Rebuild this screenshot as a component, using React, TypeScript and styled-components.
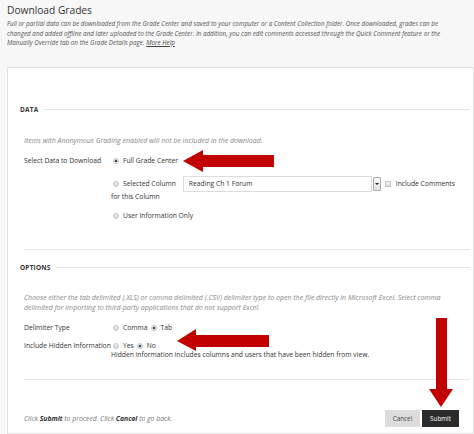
import React from "react";
import styled, { createGlobalStyle } from "styled-components";

const Global = createGlobalStyle`
  html, body { margin: 0; padding: 0; background: #ffffff; }
  body { font-family: "Open Sans", "Noto Sans", sans-serif; color: #333; }
  * { box-sizing: border-box; }
`;

const Page = styled.div`
  position: relative;
  width: 474px;
  height: 434px;
  overflow: hidden;
  background: #f7f7f7;
`;

const Header = styled.header`
  height: 67px;
  padding: 3px 7px 0;
`;

const Title = styled.h1`
  margin: 0;
  font-size: 10.2px;
  line-height: 14px;
  font-weight: 400;
  color: #333;
`;

const Intro = styled.p`
  margin: 2px 0 0;
  font-size: 6.3px;
  line-height: 9.5px;
  font-style: italic;
  color: #555;
  white-space: nowrap;
`;

const HelpLink = styled.a`
  color: #444;
  text-decoration: underline;
`;

const Panel = styled.main`
  margin-left: 7px;
  height: 367px;
  background: #ffffff;
  border: 1px solid #e2e2e2;
  padding: 36px 3px 0 12px;
`;

const SectionHeading = styled.div<{ $top?: number }>`
  display: flex;
  align-items: center;
  gap: 5px;
  margin-top: ${(p) => p.$top ?? 0}px;
  height: 10px;
  font-size: 6.5px;
  font-weight: 700;
  letter-spacing: 0.2px;
  color: #333;
  text-transform: uppercase;
  &::after {
    content: "";
    flex: 1;
    height: 1px;
    background: #e4e4e4;
  }
`;

const Body = styled.div`
  margin-left: 4px;
`;

const Note = styled.p<{ $top: number }>`
  margin: ${(p) => p.$top}px 0 0;
  font-size: 7px;
  line-height: 10px;
  font-style: italic;
  color: #888;
  white-space: nowrap;
`;

const Row = styled.div<{ $top: number; $lh?: number }>`
  display: flex;
  margin-top: ${(p) => p.$top}px;
  font-size: 6.75px;
  line-height: ${(p) => p.$lh ?? 10}px;
  color: #333;
`;

const Label = styled.div`
  width: 87px;
  flex: none;
  white-space: nowrap;
`;

const Field = styled.div`
  display: flex;
  flex-direction: column;
  white-space: nowrap;
`;

const Options = styled.div<{ $h?: number }>`
  display: flex;
  align-items: center;
  height: ${(p) => p.$h ?? 10}px;
`;

const Radio = styled.span<{ $on?: boolean; $gap?: number }>`
  display: inline-block;
  flex: none;
  width: 6px;
  height: 6px;
  margin: 0 4px 0 ${(p) => p.$gap ?? 2}px;
  border-radius: 50%;
  border: 1px solid #c4c4c4;
  background: ${(p) =>
    p.$on
      ? "radial-gradient(circle, #3a4a63 0 1.3px, #e4e4e4 1.6px)"
      : "linear-gradient(#f0f0f0, #d8d8d8)"};
`;

const SelectBox = styled.div`
  display: flex;
  align-items: center;
  width: 189px;
  height: 16px;
  margin-left: 7px;
  padding-left: 5px;
  border: 1px solid #dcdcdc;
  background: #fff;
  color: #333;
`;

const DropButton = styled.span`
  display: flex;
  align-items: center;
  justify-content: center;
  width: 8px;
  height: 14px;
  margin-left: 1px;
  border: 1px solid #aaa;
  border-radius: 1px;
  background: linear-gradient(#fafafa, #e2e2e2);
  &::after {
    content: "";
    border-left: 2px solid transparent;
    border-right: 2px solid transparent;
    border-top: 2.5px solid #222;
  }
`;

const Checkbox = styled.span`
  width: 6px;
  height: 6px;
  margin: 0 5px 0 4px;
  border: 1px solid #c4c4c4;
  background: linear-gradient(#f4f4f4, #e0e0e0);
`;

const Separator = styled.hr<{ $top: number }>`
  margin: ${(p) => p.$top}px 0 0;
  border: 0;
  height: 1px;
  background: #e6e6e6;
`;

const Footer = styled.div`
  display: flex;
  align-items: center;
  justify-content: space-between;
  margin-top: 30px;
  padding-right: 11px;
  height: 17px;
`;

const FooterNote = styled.span`
  font-size: 6.85px;
  font-style: italic;
  color: #777;
  b { color: #333; font-weight: 700; }
`;

const Buttons = styled.div`
  display: flex;
  gap: 2px;
`;

const Button = styled.button<{ $primary?: boolean }>`
  height: 17px;
  width: ${(p) => (p.$primary ? 37 : 35)}px;
  padding: 0;
  border: 0;
  font-family: "Open Sans", sans-serif;
  font-size: 6.3px;
  color: ${(p) => (p.$primary ? "#fff" : "#444")};
  background: ${(p) => (p.$primary ? "#2b2b2b" : "#dcdcdc")};
`;

const Arrow = styled.svg<{ $x: number; $y: number }>`
  position: absolute;
  left: ${(p) => p.$x}px;
  top: ${(p) => p.$y}px;
  overflow: visible;
`;

const RED = "#c20000";

export default function App() {
  return (
    <>
      <Global />
      <Page>
        <Header>
          <Title>Download Grades</Title>
          <Intro>
            Full or partial data can be downloaded from the Grade Center and saved to your computer or a Content Collection folder. Once downloaded, grades can be
            <br />
            changed and added offline and later uploaded to the Grade Center. In addition, you can edit comments accessed through the Quick Comment feature or the
            <br />
            Manually Override tab on the Grade Details page. <HelpLink>More Help</HelpLink>
          </Intro>
        </Header>
        <Panel>
          <SectionHeading>Data</SectionHeading>
          <Body>
            <Note $top={22}>Items with Anonymous Grading enabled will not be included in the download.</Note>
            <Row $top={10}>
              <Label>Select Data to Download</Label>
              <Field>
                <Options>
                  <Radio $on />Full Grade Center
                </Options>
              </Field>
            </Row>
            <Row $top={10}>
              <Label />
              <Field>
                <Options $h={16}>
                  <Radio />Selected Column
                  <SelectBox>Reading Ch 1 Forum</SelectBox>
                  <DropButton />
                  <Checkbox />Include Comments
                </Options>
                <span>for this Column</span>
              </Field>
            </Row>
            <Row $top={9}>
              <Label />
              <Field>
                <Options>
                  <Radio />User Information Only
                </Options>
              </Field>
            </Row>
            <Separator $top={28} />
          </Body>
          <SectionHeading $top={12}>Options</SectionHeading>
          <Body>
            <Note $top={21}>
              Choose either the tab delimited (.XLS) or comma delimited (.CSV) delimiter type to open the file directly in Microsoft Excel. Select comma
              <br />
              delimited for importing to third-party applications that do not support Excel.
            </Note>
            <Row $top={10}>
              <Label>Delimiter Type</Label>
              <Field>
                <Options>
                  <Radio />Comma
                  <Radio $on $gap={3} />Tab
                </Options>
              </Field>
            </Row>
            <Row $top={8} $lh={9}>
              <Label>Include Hidden Information</Label>
              <Field>
                <Options $h={9}>
                  <Radio />Yes
                  <Radio $on $gap={3} />No
                </Options>
                <span>Hidden information includes columns and users that have been hidden from view.</span>
              </Field>
            </Row>
            <Separator $top={20} />
            <Footer>
              <FooterNote>
                Click <b>Submit</b> to proceed. Click <b>Cancel</b> to go back.
              </FooterNote>
              <Buttons>
                <Button>Cancel</Button>
                <Button $primary>Submit</Button>
              </Buttons>
            </Footer>
          </Body>
        </Panel>
        <Arrow $x={183} $y={150} width="92" height="22" viewBox="0 0 92 22">
          <polygon points="0,11 20,0 20,5 91,5 91,17 20,17 20,22" fill={RED} />
        </Arrow>
        <Arrow $x={177} $y={329} width="93" height="22" viewBox="0 0 93 22">
          <polygon points="0,12 19,0 19,6 92,6 92,18 19,18 19,22" fill={RED} />
        </Arrow>
        <Arrow $x={429} $y={318} width="24" height="89" viewBox="0 0 24 89">
          <polygon points="7,0 18,0 18,71 24,71 12,89 0,71 7,71" fill={RED} />
        </Arrow>
      </Page>
    </>
  );
}
